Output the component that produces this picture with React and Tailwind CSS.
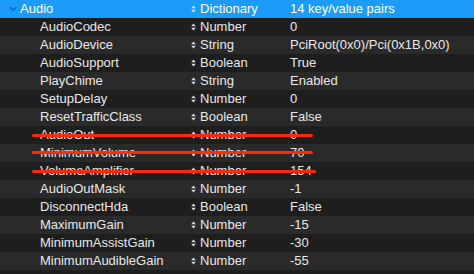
import React from 'react';

const rows = [
  { key: 'AudioCodec', type: 'Number', value: '0' },
  { key: 'AudioDevice', type: 'String', value: 'PciRoot(0x0)/Pci(0x1B,0x0)' },
  { key: 'AudioSupport', type: 'Boolean', value: 'True' },
  { key: 'PlayChime', type: 'String', value: 'Enabled' },
  { key: 'SetupDelay', type: 'Number', value: '0' },
  { key: 'ResetTrafficClass', type: 'Boolean', value: 'False' },
  { key: 'AudioOut', type: 'Number', value: '0', strike: 'top-[8px] w-[281px]' },
  { key: 'MinimumVolume', type: 'Number', value: '70', strike: 'top-[7px] w-[281px]' },
  { key: 'VolumeAmplifier', type: 'Number', value: '154', strike: 'top-[8px] w-[284px]' },
  { key: 'AudioOutMask', type: 'Number', value: '-1' },
  { key: 'DisconnectHda', type: 'Boolean', value: 'False' },
  { key: 'MaximumGain', type: 'Number', value: '-15' },
  { key: 'MinimumAssistGain', type: 'Number', value: '-30' },
  { key: 'MinimumAudibleGain', type: 'Number', value: '-55' },
];

// little up/down stepper arrows in the type column
const SortArrows = () => (
  <svg width="5" height="8" viewBox="0 0 5 8" className="mr-[4px] shrink-0">
    <path d="M2.5 0.5 L4.8 3.2 L0.2 3.2 Z" fill="#d8d8d8" />
    <path d="M2.5 7.5 L4.8 4.8 L0.2 4.8 Z" fill="#d8d8d8" />
  </svg>
);

const Row = ({ row, i }) => (
  <div
    className={
      'relative flex items-center h-[18px] ' +
      (i % 2 === 0 ? 'bg-[#1e1e1e]' : 'bg-[#2a2a2a]')
    }
  >
    <div className="w-[191px] pl-[40px] whitespace-nowrap">{row.key}</div>
    <div className="w-[99px] flex items-center whitespace-nowrap">
      <SortArrows />
      {row.type}
    </div>
    <div className="flex-1 whitespace-nowrap">{row.value}</div>
    {row.strike && (
      <div className={'absolute left-[32px] h-[3px] rounded-full bg-[#ff2a0a] ' + row.strike} />
    )}
  </div>
);

export default function App() {
  return (
    <div
      className="w-[474px] h-[274px] overflow-hidden bg-[#1e1e1e] text-[13px] leading-[18px] text-[#e8e8e8]"
      style={{ fontFamily: '"Liberation Sans", Arial, sans-serif' }}
    >
      {/* selected dictionary row */}
      <div className="flex items-center h-[18px] bg-[#1b9bfa] text-white">
        <div className="w-[191px] flex items-center pl-[9px]">
          <svg width="8" height="6" viewBox="0 0 8 6" className="mr-[3px]">
            <path d="M0.8 1 L4 4.4 L7.2 1" fill="none" stroke="#1466c2" strokeWidth="1.6" />
          </svg>
          Audio
        </div>
        <div className="w-[99px] flex items-center">
          <SortArrows />
          Dictionary
        </div>
        <div className="flex-1">14 key/value pairs</div>
      </div>
      {rows.map((row, i) => (
        <Row key={row.key} row={row} i={i} />
      ))}
    </div>
  );
}
